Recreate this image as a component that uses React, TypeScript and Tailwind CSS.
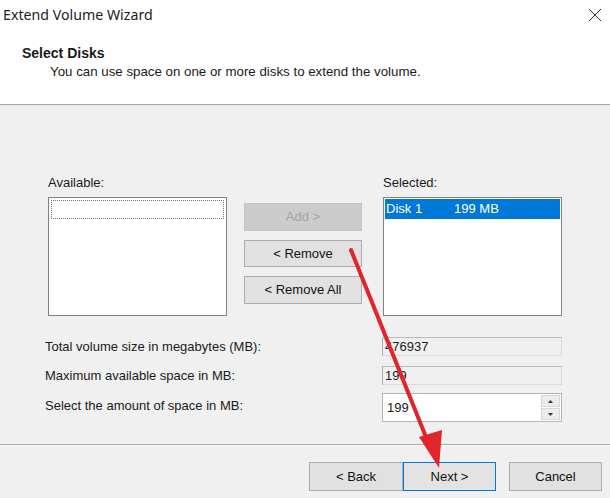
const font = { fontFamily: '"Liberation Sans", Arial, sans-serif' };

function WinButton({ label, disabled, primary, className = "" }: { label: string; disabled?: boolean; primary?: boolean; className?: string }) {
    return (
        <div
            className={`flex items-center justify-center border text-[13px] ${
                disabled
                    ? "bg-[#cccccc] border-[#c4c4c4] text-[#a3a3a3]"
                    : primary
                    ? "bg-[#e3e3e3] border-[#0078d7] text-[#111]"
                    : "bg-[#e1e1e1] border-[#adadad] text-[#111]"
            } ${className}`}
        >
            {label}
        </div>
    );
}

function ReadOnlyField({ value }: { value: string }) {
    return (
        <div className="w-[180px] h-[19px] border border-[#dadada] border-t-[#b9b9b9] border-l-[#a9a9a9] bg-[#f0f0f0] px-[2px] flex items-center text-[13px] text-[#222]">
            {value}
        </div>
    );
}

function SpinArrow({ up }: { up?: boolean }) {
    return (
        <svg width="5" height="3" viewBox="0 0 5 3">
            <polygon points={up ? "0,3 5,3 2.5,0" : "0,0 5,0 2.5,3"} fill="#333" />
        </svg>
    );
}

export default function App() {
    return (
        <div className="relative w-[610px] h-[498px] overflow-hidden bg-[#f0f0f0] text-[#1a1a1a]" style={font}>
            {/* title bar + header */}
            <div className="bg-white h-[105px] border-b border-[#a8a8a8]">
                <div className="h-[29px] flex items-center justify-between pl-[3px] pr-[6px]">
                    <span className="text-[14.2px] text-[#222]" style={{ fontFamily: '"Noto Sans", "Liberation Sans", sans-serif' }}>
                        Extend Volume Wizard
                    </span>
                    <svg width="14" height="14" viewBox="0 0 14 14" className="mr-[2px]">
                        <path d="M1 1 L13 13 M13 1 L1 13" stroke="#333" strokeWidth="1" />
                    </svg>
                </div>
                <div className="pl-[22px] pt-[16px] text-[14px] leading-[17px] font-bold">Select Disks</div>
                <div className="pl-[50px] pt-[1px] text-[13.3px] leading-[17px]">You can use space on one or more disks to extend the volume.</div>
            </div>
            <div className="h-px bg-[#e8e8e8]" />

            {/* body */}
            <div className="h-[338px] pt-[69px]">
                <div className="flex pl-[48px]">
                    <div className="w-[179px]">
                        <div className="text-[13px] h-[16px] leading-[16px] mb-[6px]">Available:</div>
                        <div className="h-[119px] border border-[#828282] bg-white p-[2px]">
                            <div className="h-[19px] border border-dotted border-[#777] bg-white" />
                        </div>
                    </div>
                    <div className="w-[118px] ml-[17px] pt-[28px] flex flex-col gap-[9px]">
                        <WinButton label="Add >" disabled className="h-[28px]" />
                        <WinButton label="< Remove" className="h-[27px]" />
                        <WinButton label="< Remove All" className="h-[28px]" />
                    </div>
                    <div className="w-[179px] ml-[21px]">
                        <div className="text-[13px] h-[16px] leading-[16px] mb-[6px]">Selected:</div>
                        <div className="h-[119px] border border-[#828282] bg-white p-[1px]">
                            <div className="h-[20px] bg-[#0078d7] text-white text-[13px] flex items-center px-[1px]">
                                <span className="w-[68px]">Disk 1</span>
                                <span>199 MB</span>
                            </div>
                        </div>
                    </div>
                </div>

                <div className="mt-[21px] pl-[45px] pr-[48px] flex flex-col text-[13px]">
                    <div className="flex items-center justify-between">
                        <span>Total volume size in megabytes (MB):</span>
                        <ReadOnlyField value="476937" />
                    </div>
                    <div className="flex items-center justify-between mt-[9px]">
                        <span>Maximum available space in MB:</span>
                        <ReadOnlyField value="199" />
                    </div>
                    <div className="flex items-center justify-between mt-[8px]">
                        <span className="-mt-[4px]">Select the amount of space in MB:</span>
                        <div className="w-[180px] h-[29px] border border-[#b5b5b5] bg-white flex">
                            <div className="flex-1 flex items-center px-[4px] text-[13px]">199</div>
                            <div className="w-[21px] flex flex-col p-[1px] gap-px">
                                <div className="flex-1 bg-[#ececec] border border-[#d6d6d6] flex items-center justify-center">
                                    <SpinArrow up />
                                </div>
                                <div className="flex-1 bg-[#ececec] border border-[#d6d6d6] flex items-center justify-center">
                                    <SpinArrow />
                                </div>
                            </div>
                        </div>
                    </div>
                </div>
            </div>

            {/* footer */}
            <div className="h-px bg-[#a8a8a8]" />
            <div className="h-px bg-[#fafafa]" />
            <div className="flex pl-[309px] pt-[16px]">
                <WinButton label="< Back" className="w-[94px] h-[29px]" />
                <WinButton label="Next >" primary className="w-[93px] h-[29px]" />
                <WinButton label="Cancel" className="w-[93px] h-[29px] ml-[13px]" />
            </div>

            {/* red annotation arrow */}
            <svg className="absolute left-0 top-0 pointer-events-none" width="610" height="498">
                <line x1="351" y1="250" x2="428" y2="442" stroke="#e0252b" strokeWidth="4" strokeLinecap="round" />
                <polygon points="419,437 442,430 439,468" fill="#e0252b" />
            </svg>
        </div>
    );
}
